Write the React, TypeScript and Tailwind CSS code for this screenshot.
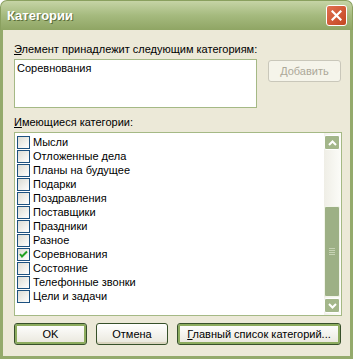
const categories = [
  { name: "Мысли", checked: false },
  { name: "Отложенные дела", checked: false },
  { name: "Планы на будущее", checked: false },
  { name: "Подарки", checked: false },
  { name: "Поздравления", checked: false },
  { name: "Поставщики", checked: false },
  { name: "Праздники", checked: false },
  { name: "Разное", checked: false },
  { name: "Соревнования", checked: true },
  { name: "Состояние", checked: false },
  { name: "Телефонные звонки", checked: false },
  { name: "Цели и задачи", checked: false },
];

function CheckBox({ checked }: { checked: boolean }) {
  return (
    <div className="w-[13px] h-[13px] border border-[#1c5180] bg-gradient-to-br from-[#dcdcd4] to-white flex items-center justify-center shrink-0">
      {checked && (
        <svg width="9" height="9" viewBox="0 0 9 9">
          <path d="M1 4 L3 6.5 L8 1.5" stroke="#21a121" strokeWidth="2" fill="none" />
        </svg>
      )}
    </div>
  );
}

function XpButton({
  children,
  className = "",
  focused = false,
}: {
  children: React.ReactNode;
  className?: string;
  focused?: boolean;
}) {
  return (
    <div
      className={`h-[22px] rounded-[3px] border border-[#37502a] bg-gradient-to-b from-white to-[#e9e7dc] flex items-center justify-center text-black ${
        focused ? "shadow-[inset_0_0_0_2px_#8cab5e]" : "shadow-[inset_0_-2px_0_#d9d4be]"
      } ${className}`}
    >
      {children}
    </div>
  );
}

export default function App() {
  return (
    <div
      className="w-[353px] h-[359px] flex flex-col text-[11px] text-black"
      style={{ fontFamily: '"Liberation Sans", Arial, sans-serif' }}
    >
      {/* Title bar */}
      <div className="h-[30px] rounded-t-[7px] bg-gradient-to-b from-[#c6d4a6] via-[#a5ba7e] to-[#8fa564] border border-b-0 border-[#8aa05f] flex items-center justify-between pl-[6px] pr-[5px] shrink-0">
        <span className="text-white font-bold text-[13px] [text-shadow:1px_1px_0_#5b6e3a]">
          Категории
        </span>
        <div className="w-[21px] h-[21px] rounded-[3px] border border-white bg-gradient-to-br from-[#e07050] to-[#c4461f] flex items-center justify-center">
          <svg width="11" height="11" viewBox="0 0 11 11">
            <path d="M1.5 1.5 L9.5 9.5 M9.5 1.5 L1.5 9.5" stroke="white" strokeWidth="2.2" strokeLinecap="square" />
          </svg>
        </div>
      </div>

      {/* Body */}
      <div className="flex-1 bg-[#ece9d8] border-x-[3px] border-b-[3px] border-[#94aa6c] flex flex-col pl-[11px] pr-[8px]">
        <div className="mt-[12px] leading-[14px]">
          <span className="underline">Э</span>лемент принадлежит следующим категориям:
        </div>
        <div className="mt-[3px] flex items-start">
          <div className="w-[243px] h-[49px] bg-white border border-[#a5b985] px-[2px] pt-[1px] leading-[14px]">
            Соревнования
          </div>
          <div className="ml-[11px] mt-[1px] w-[73px] h-[22px] rounded-[3px] border border-[#c9c7ba] bg-[#f5f4ea] flex items-center justify-center text-[#aca899]">
            <span className="underline">Д</span>обавить
          </div>
        </div>
        <div className="mt-[7px] leading-[14px]">
          <span className="underline">И</span>меющиеся категории:
        </div>
        <div className="mt-[3px] w-[328px] h-[184px] bg-white border border-[#a5b985] flex">
          <div className="flex-1 flex flex-col pt-[2px] pl-[2px]">
            {categories.map((c) => (
              <div key={c.name} className="h-[14px] flex items-center gap-[3px]">
                <CheckBox checked={c.checked} />
                <span className="leading-[14px]">{c.name}</span>
              </div>
            ))}
          </div>
          {/* Scrollbar */}
          <div className="w-[17px] flex flex-col py-[2px] pr-[1px] bg-gradient-to-r from-[#f3f2ec] to-[#fdfdfa]">
            <div className="h-[15px] rounded-[2px] border border-white bg-[#a3b68a] flex items-center justify-center">
              <svg width="9" height="6" viewBox="0 0 9 6">
                <path d="M1 5 L4.5 1.5 L8 5" stroke="white" strokeWidth="2" fill="none" />
              </svg>
            </div>
            <div className="h-[56px] bg-gradient-to-r from-[#efeee6] to-[#fbfbf7]" />
            <div className="flex-1 rounded-[2px] border border-[#f2f5ea] bg-[#9db085] flex items-center justify-center">
              <div className="flex flex-col gap-[1px]">
                <div className="w-[6px] h-px bg-[#c7d3b4]" />
                <div className="w-[6px] h-px bg-[#c7d3b4]" />
                <div className="w-[6px] h-px bg-[#c7d3b4]" />
                <div className="w-[6px] h-px bg-[#c7d3b4]" />
              </div>
            </div>
            <div className="h-[15px] mt-px rounded-[2px] border border-white bg-[#a3b68a] flex items-center justify-center">
              <svg width="9" height="6" viewBox="0 0 9 6">
                <path d="M1 1 L4.5 4.5 L8 1" stroke="white" strokeWidth="2" fill="none" />
              </svg>
            </div>
          </div>
        </div>
        <div className="mt-[7px] flex">
          <XpButton className="w-[73px]" focused>
            OK
          </XpButton>
          <XpButton className="w-[72px] ml-[9px]">Отмена</XpButton>
          <XpButton className="w-[164px] ml-[9px]" focused>
            <span>
              <span className="underline">Г</span>лавный список категорий...
            </span>
          </XpButton>
        </div>
      </div>
    </div>
  );
}
